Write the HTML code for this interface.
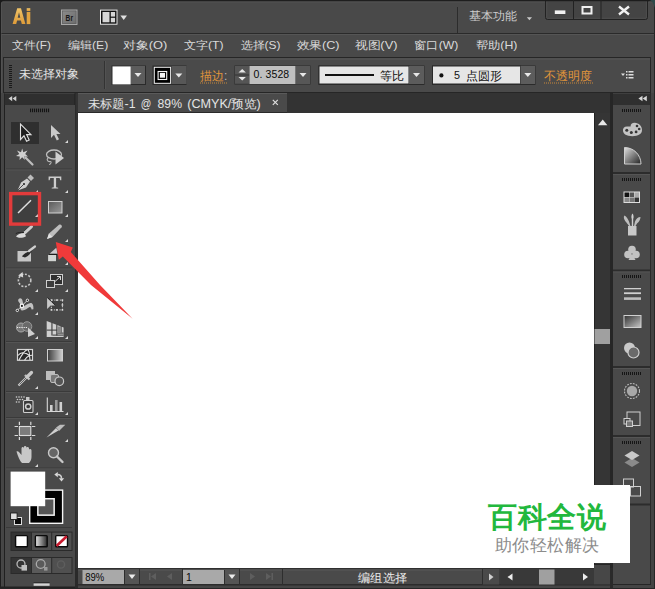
<!DOCTYPE html>
<html><head><meta charset="utf-8">
<style>
html,body{margin:0;padding:0;width:655px;height:589px;overflow:hidden;background:#3a3a3a}
svg{display:block}
text{font-family:"Liberation Sans",sans-serif}
</style></head><body>
<svg width="655" height="589" viewBox="0 0 655 589">
<!-- window bg -->
<rect x="0" y="0" width="655" height="589" fill="#494949"/>
<rect x="0" y="0" width="655" height="1.5" fill="#1e1e1e"/>
<rect x="0" y="0" width="1.2" height="589" fill="#1e1e1e"/><rect x="1.2" y="1.5" width="0.8" height="587" fill="#575757"/><rect x="1.2" y="1.5" width="653" height="0.8" fill="#575757"/><path d="M0 0H5C2.5 0.5 0.5 2.5 0 5Z" fill="#1a1a1a"/>
<!-- title bar -->
<defs><linearGradient id="aig" x1="0" y1="0" x2="0" y2="1"><stop offset="0" stop-color="#f0c468"/><stop offset="1" stop-color="#dd9a38"/></linearGradient></defs>
<path d="M12.6 24.1L17.2 8.2H21L25.4 24.1H21.8L20.9 20.5H17.1L16.2 24.1ZM17.7 17.8H20.3L19 12.3Z" fill="url(#aig)" fill-rule="evenodd"/>
<rect x="26.7" y="8.2" width="3.6" height="2.9" fill="url(#aig)"/><rect x="26.7" y="12" width="3.6" height="12.1" fill="#e2a440"/>
<defs><linearGradient id="brg" x1="0" y1="0" x2="1" y2="1"><stop offset="0" stop-color="#8c8c8c"/><stop offset="1" stop-color="#6c6c6c"/></linearGradient></defs>
<rect x="61.5" y="10" width="15.5" height="14.5" fill="url(#brg)" stroke="#a8a8a8" stroke-width="1"/>
<rect x="62.5" y="11" width="13.5" height="12.5" fill="none" stroke="#5a5a5a" stroke-width="0.6"/>
<text x="65.6" y="20.8" font-size="8.6" font-weight="bold" fill="#161616" textLength="7.4" lengthAdjust="spacingAndGlyphs">Br</text>
<rect x="100" y="9.6" width="17.5" height="15.1" fill="#e8e8e8"/>
<rect x="101" y="10.6" width="15.5" height="13.1" fill="#111"/>
<rect x="102.5" y="12" width="7" height="10.3" fill="#d6d6d6"/>
<rect x="110.8" y="12" width="4.3" height="4.6" fill="#d6d6d6"/>
<rect x="110.8" y="17.8" width="4.3" height="4.5" fill="#d6d6d6"/>
<path d="M120.4 15.4h6.6l-3.3 4.7z" fill="#e0e0e0"/>
<rect x="457" y="7" width="1" height="26" fill="#2c2c2c"/>
<rect x="458" y="7" width="1" height="26" fill="#4a4a4a"/>
<text x="469" y="20" font-size="12" fill="#cdcdcd">基本功能</text>
<path d="M526.8 17.2h5.2l-2.6 3z" fill="#c8c8c8"/>
<!-- window buttons -->
<path d="M545.5 0v17.5a2 2 0 0 0 2 2h98a2 2 0 0 0 2-2v-17.5" fill="#444444" stroke="#222" stroke-width="1"/>
<path d="M546.8 1.5v15.8a1 1 0 0 0 1 1h97.6a1 1 0 0 0 1-1v-15.8" fill="none" stroke="#505050" stroke-width="0.8"/>
<rect x="545" y="0" width="104" height="1.2" fill="#1c1c1c"/>
<rect x="573" y="0" width="1" height="19.5" fill="#222"/>
<rect x="600.5" y="0" width="1" height="19.5" fill="#222"/>
<rect x="554.8" y="10.4" width="10.6" height="3.6" fill="#f0f0f0"/>
<rect x="582.5" y="7" width="9" height="6.5" fill="none" stroke="#f0f0f0" stroke-width="2"/>
<path d="M619 6.5l10 8 M629 6.5l-10 8" stroke="#f0f0f0" stroke-width="2.4"/>
<!-- menu bar -->
<rect x="1.5" y="33" width="653" height="1" fill="#2a2a2a"/><rect x="1.5" y="34" width="653" height="1" fill="#555"/>
<g font-size="11" fill="#dadada"><text x="12.1" y="48.6" textLength="38.8" lengthAdjust="spacingAndGlyphs">文件(F)</text><text x="67.7" y="48.6" textLength="40.6" lengthAdjust="spacingAndGlyphs">编辑(E)</text><text x="123.1" y="48.6" textLength="44.2" lengthAdjust="spacingAndGlyphs">对象(O)</text><text x="183.7" y="48.6" textLength="39.8" lengthAdjust="spacingAndGlyphs">文字(T)</text><text x="240.7" y="48.6" textLength="39.8" lengthAdjust="spacingAndGlyphs">选择(S)</text><text x="296.7" y="48.6" textLength="42.8" lengthAdjust="spacingAndGlyphs">效果(C)</text><text x="354.7" y="48.6" textLength="42.8" lengthAdjust="spacingAndGlyphs">视图(V)</text><text x="414.3" y="48.6" textLength="44.0" lengthAdjust="spacingAndGlyphs">窗口(W)</text><text x="475.7" y="48.6" textLength="41.8" lengthAdjust="spacingAndGlyphs">帮助(H)</text></g>
<!-- control bar -->
<rect x="3.5" y="57.5" width="647" height="35" fill="#4a4a4a" stroke="#262626" stroke-width="1"/><rect x="4" y="58.5" width="646" height="1" fill="#565656"/>

<!-- control bar content -->
<g fill="#1a1a1a"><rect x="9" y="65" width="3" height="1"/><rect x="9" y="67" width="3" height="1"/><rect x="9" y="69" width="3" height="1"/><rect x="9" y="71" width="3" height="1"/><rect x="9" y="73" width="3" height="1"/><rect x="9" y="75" width="3" height="1"/><rect x="9" y="77" width="3" height="1"/><rect x="9" y="79" width="3" height="1"/><rect x="9" y="81" width="3" height="1"/><rect x="9" y="83" width="3" height="1"/><rect x="9" y="85" width="3" height="1"/><rect x="9" y="87" width="3" height="1"/></g>
<text x="19" y="78.2" font-size="12" fill="#e4e4e4">未选择对象</text>
<rect x="104" y="61" width="1" height="28" fill="#333"/><rect x="105" y="61" width="1" height="28" fill="#525252"/>
<rect x="111.5" y="65.5" width="34.5" height="19.5" fill="#2a2a2a"/><rect x="152.5" y="65.5" width="34" height="19.5" fill="#2a2a2a"/><rect x="318.5" y="65.5" width="106" height="19.5" fill="#2a2a2a"/><rect x="432" y="65.5" width="103.5" height="19.5" fill="#2a2a2a"/>
<rect x="112.5" y="66.4" width="18.2" height="18" fill="#fff"/>
<rect x="131" y="66" width="14" height="18" fill="#5c5c5c"/>
<path d="M134.5 73h7l-3.5 4z" fill="#e8e8e8"/>
<rect x="153.8" y="66.8" width="17.3" height="17" fill="#f0f0f0"/>
<rect x="154.8" y="67.8" width="15.3" height="15" fill="#000"/>
<rect x="158.1" y="71.5" width="8.6" height="8" fill="none" stroke="#f4f4f4" stroke-width="1.1"/>
<rect x="159.9" y="72.9" width="5.1" height="4.8" fill="#f4f4f4"/>
<rect x="171.5" y="66" width="15" height="18" fill="#575757"/>
<path d="M175.3 73.5h7l-3.5 4z" fill="#e8e8e8"/>
<text x="200" y="80" font-size="12" fill="#e2963a">描边</text>
<text x="224" y="80" font-size="12" fill="#bbb">:</text>
<path d="M200 83h28" stroke="#c8883a" stroke-width="1" stroke-dasharray="1 1"/>
<rect x="234.5" y="65.5" width="76" height="19" fill="#2a2a2a"/>
<rect x="235" y="66" width="14.5" height="8.6" fill="#555"/><rect x="235" y="75.4" width="14.5" height="8.4" fill="#555"/>
<path d="M238.5 72.5l3.7-3.6 3.7 3.6z M238.5 77l3.7 3.6 3.7-3.6z" fill="#e6e6e6"/>
<rect x="249.5" y="66" width="46" height="18" fill="#bfbfbf"/>
<text x="253.5" y="78" font-size="10.5" fill="#0a0a0a" textLength="35.7" lengthAdjust="spacing">0. 3528</text>
<rect x="296" y="66" width="14" height="18" fill="#575757"/>
<path d="M299.5 73h7l-3.5 4z" fill="#e8e8e8"/>
<rect x="319" y="66" width="90" height="18" fill="#e6e6e6" stroke="#2a2a2a" stroke-width="1"/>
<rect x="325" y="74" width="49" height="2" fill="#111"/>
<text x="380" y="80" font-size="12" fill="#111">等比</text>
<rect x="409" y="66" width="15" height="18" fill="#5c5c5c"/>
<path d="M413 73h7l-3.5 4z" fill="#e8e8e8"/>
<rect x="432.5" y="66" width="88" height="18" fill="#e6e6e6" stroke="#2a2a2a" stroke-width="1"/>
<circle cx="441.4" cy="75.4" r="2.1" fill="#111"/>
<text x="454" y="79" font-size="11" fill="#111" textLength="6" lengthAdjust="spacingAndGlyphs">5</text>
<text x="466" y="79.5" font-size="12" fill="#111" textLength="36" lengthAdjust="spacing">点圆形</text>
<rect x="520.5" y="66" width="14.5" height="18" fill="#5c5c5c"/>
<path d="M524.3 73h7l-3.5 4z" fill="#e8e8e8"/>
<text x="544" y="80" font-size="12" fill="#e2963a">不透明度</text>
<path d="M544 83h49" stroke="#c8883a" stroke-width="1" stroke-dasharray="1 1"/>
<path d="M621 73.5h4l-2 2.5z" fill="#ddd"/>
<g fill="#ddd"><rect x="626" y="71" width="1.5" height="1.5"/><rect x="626" y="74" width="1.5" height="1.5"/><rect x="626" y="77" width="1.5" height="1.5"/><rect x="628.5" y="71" width="5" height="1.5"/><rect x="628.5" y="74" width="5" height="1.5"/><rect x="628.5" y="77" width="5" height="1.5"/></g>

<!-- document area background -->
<rect x="75" y="93" width="538" height="496" fill="#333333"/>
<!-- left toolbar -->
<rect x="4" y="93" width="71.3" height="496" fill="#202020"/>
<rect x="1.2" y="93" width="2.8" height="496" fill="#454545"/>
<rect x="4.5" y="93" width="70" height="12" fill="#2f2f2f"/><rect x="4.5" y="93" width="70" height="0.8" fill="#444"/>
<path d="M12.2 95.9v5.4l-3.7-2.7z M16.3 95.9v5.4l-3.7-2.7z" fill="#d0d0d0"/>
<rect x="5" y="105" width="70" height="484" fill="#494949"/>
<g fill="#141414"><rect x="30" y="108.6" width="1.1" height="3.6"/><rect x="32" y="108.6" width="1.1" height="3.6"/><rect x="34" y="108.6" width="1.1" height="3.6"/><rect x="36" y="108.6" width="1.1" height="3.6"/><rect x="38" y="108.6" width="1.1" height="3.6"/><rect x="40" y="108.6" width="1.1" height="3.6"/><rect x="42" y="108.6" width="1.1" height="3.6"/><rect x="44" y="108.6" width="1.1" height="3.6"/><rect x="46" y="108.6" width="1.1" height="3.6"/><rect x="48" y="108.6" width="1.1" height="3.6"/></g>


<!-- toolbar separators -->
<g fill="#3a3a3a"><rect x="6" y="168.5" width="66" height="1"/><rect x="6" y="267.5" width="66" height="1"/><rect x="6" y="341" width="66" height="1"/><rect x="6" y="391" width="66" height="1"/><rect x="6" y="417" width="66" height="1"/><rect x="6" y="467.5" width="66" height="1"/><rect x="6" y="527" width="66" height="1"/></g>
<g fill="#545454"><rect x="6" y="169.5" width="66" height="1"/><rect x="6" y="268.5" width="66" height="1"/><rect x="6" y="342" width="66" height="1"/><rect x="6" y="392" width="66" height="1"/><rect x="6" y="418" width="66" height="1"/><rect x="6" y="468.5" width="66" height="1"/></g>
<!-- selected tool bg -->
<rect x="11" y="122" width="28" height="22" fill="#2f2f2f"/>
<rect x="12" y="195" width="26" height="28" fill="#3f3f3f"/>
<!-- flyout triangles -->
<g fill="#d8d8d8">
<path d="M68 140v3h-3z"/><path d="M68 190v3h-3z"/><path d="M38 190v3h-3z"/>
<path d="M38 214v3h-3z"/><path d="M68 214v3h-3z"/><path d="M68 239v3h-3z"/>
<path d="M68 262v3h-3z"/><path d="M38 289v3h-3z"/><path d="M68 289v3h-3z"/>
<path d="M38 312v3h-3z"/><path d="M38 336v3h-3z"/><path d="M68 336v3h-3z"/>
<path d="M38 386v3h-3z"/><path d="M38 412v3h-3z"/><path d="M68 412v3h-3z"/>
<path d="M68 439v3h-3z"/><path d="M38 464v3h-3z"/>
</g>
<!-- selection -->
<path d="M20.5 124L20.5 139.5L24 135.8L26.6 141.2L29.2 140L26.6 134.6L31 134.6Z" fill="#1e1e1e" stroke="#e0e0e0" stroke-width="1.1" stroke-linejoin="miter"/>
<!-- direct selection -->
<path d="M51 125L51 138L54 134.8L56.8 140.4L59 139.2L56.4 134L60.5 134Z" fill="#c9c9c9"/>
<!-- magic wand -->
<path d="M22.2 148.5L23.3 152.2L27.5 150.5L25.2 154L28 156.5L24.3 156.5L24.8 160L22.2 157.2L19.5 160L19.8 156.5L16 156L19.3 154L17 150.5L21 152.2Z" fill="#d0d0d0"/>
<path d="M25.5 157.5L32.5 164.5" stroke="#bdbdbd" stroke-width="2.2" stroke-linecap="round"/>
<!-- lasso -->
<ellipse cx="54" cy="154.5" rx="7.5" ry="4.5" fill="none" stroke="#c0c0c0" stroke-width="1.3"/>
<path d="M48 158c-2 2 0 4 2 3.5s1 3-1 3" fill="none" stroke="#b8b8b8" stroke-width="1.1"/>
<path d="M55.5 151.5L55.5 164.5L64 158Z" fill="#cfcfcf"/>
<!-- pen -->
<path d="M17.5 190.5L21 182.5L27 178.5L30 181.5L26 187.5Z" fill="#cfcfcf"/>
<path d="M17.5 190.5L23.5 184.5" stroke="#2a2a2a" stroke-width="0.8"/>
<circle cx="24" cy="184" r="1" fill="#222"/>
<path d="M27.5 177.5L30.5 174.5L34 178L31 181Z" fill="#bdbdbd"/>
<!-- type T -->
<path d="M48.6 176.5H61.3V180.2L60.3 180.2L59.6 178.1H56.1V187.2L58.2 187.7V188.6H51.7V187.7L53.8 187.2V178.1H50.3L49.6 180.2L48.6 180.2Z" fill="#cdcdcd"/>
<!-- line -->
<path d="M18 213L31 200.3" stroke="#dedede" stroke-width="1.5"/>
<!-- rect -->
<defs>
<linearGradient id="gr1" x1="0" y1="0" x2="1" y2="1"><stop offset="0" stop-color="#5a5a5a"/><stop offset="1" stop-color="#9a9a9a"/></linearGradient>
<linearGradient id="gr2" x1="0" y1="0" x2="1" y2="0"><stop offset="0" stop-color="#3a3a3a"/><stop offset="1" stop-color="#d0d0d0"/></linearGradient>
<linearGradient id="gr3" x1="0" y1="0" x2="1" y2="1"><stop offset="0" stop-color="#303030"/><stop offset="1" stop-color="#c8c8c8"/></linearGradient>
</defs>
<rect x="48.5" y="201.5" width="13.5" height="11.5" fill="url(#gr1)" stroke="#d0d0d0" stroke-width="1"/>
<!-- brush -->
<path d="M24.2 231.2L30.6 225.6" stroke="#1e1e1e" stroke-width="1"/>
<path d="M25 232.6L31.5 226.6" stroke="#cdcdcd" stroke-width="3" stroke-linecap="round"/>
<path d="M15.8 233.6C18 232.4 21 232.2 24 232.6" stroke="#1e1e1e" stroke-width="0.9" fill="none"/>
<path d="M16 236.6C17 234.4 20.5 233.2 24.6 233L26 236.2C23 237.9 19 238.6 16 236.6Z" fill="#dadada"/>
<!-- pencil -->
<path d="M47 239L49 233.5L59 224.8C60.5 223.5 62.8 225.8 61.6 227.3L52.5 237Z" fill="#bdbdbd"/>
<path d="M47 239L49 233.5L52.5 237Z" fill="#e0e0e0"/>
<!-- blob brush -->
<rect x="17.5" y="251" width="13.5" height="10.5" fill="#c6c6c6"/>
<path d="M22 256.5C24 253 27 252.5 28.5 251.5L33 249.5C31 252 29.5 256 25 257.5Z" fill="#2a2a2a"/>
<path d="M29 251L35 246.5" stroke="#cfcfcf" stroke-width="2.2" stroke-linecap="round"/>
<!-- eraser -->
<path d="M49.5 253.8L56.3 247.8L57.5 253.8Z" fill="#cdc8cc"/>
<path d="M49 254.4H57" stroke="#1a1a1a" stroke-width="1"/>
<rect x="48.1" y="255" width="7.9" height="6.2" fill="#d2d4d2"/>
<!-- rotate -->
<circle cx="24.6" cy="280.4" r="6.2" fill="none" stroke="#c8c8c8" stroke-width="1.6" stroke-dasharray="2 1.6"/>
<path d="M18.2 275.6L22.6 272L23.2 277.6Z" fill="#d6d6d6"/>
<!-- scale -->
<rect x="50.5" y="274.5" width="12" height="10" fill="#2f2f2f" stroke="#cfcfcf" stroke-width="1"/>
<rect x="46.5" y="280.5" width="8" height="7" fill="#3c3c3c" stroke="#cfcfcf" stroke-width="1"/>
<path d="M55 281.5L60.5 276.5M57 276.5H60.5V280" fill="none" stroke="#d8d8d8" stroke-width="1"/>
<!-- warp -->
<path d="M18.2 301C17.8 297.6 21.8 297.2 22.4 300.2L23.8 306.6C26 304.8 28.5 303.2 30.6 303C32.6 302.9 33.8 305.6 33.4 309.2L31.6 309.4C31.2 307.6 30.6 306.6 29.6 307C27.4 308.4 25.2 310.4 22.4 310.4C20.4 310.4 19.8 308 20.2 304.4C19.8 302.6 18.6 302.4 18.2 301Z" fill="#c2c2c2"/>
<path d="M17.3 310.4L27.4 300.3" stroke="#e0e0e0" stroke-width="0.9"/>
<circle cx="21.9" cy="305.9" r="1.7" fill="#222" stroke="#f2f2f2" stroke-width="1.2"/>
<circle cx="17.3" cy="310.4" r="1.2" fill="#222" stroke="#ececec" stroke-width="1"/>
<circle cx="27.4" cy="300.3" r="1.2" fill="#222" stroke="#ececec" stroke-width="1"/>
<!-- free transform -->
<rect x="51.4" y="300.1" width="11" height="9.8" fill="#404040" stroke="#d8d8d8" stroke-width="0.9" stroke-dasharray="1.4 1.4"/>
<g fill="#e0e0e0"><rect x="50.6" y="299.3" width="1.6" height="1.6"/><rect x="61.6" y="299.3" width="1.6" height="1.6"/><rect x="50.6" y="309.1" width="1.6" height="1.6"/><rect x="61.6" y="309.1" width="1.6" height="1.6"/><rect x="56.1" y="299.3" width="1.6" height="1.6"/><rect x="56.1" y="309.1" width="1.6" height="1.6"/><rect x="61.6" y="304.2" width="1.6" height="1.6"/></g>
<path d="M47.1 298L55 305.6H50.6L47.1 309Z" fill="#c8c8c8"/>
<path d="M47.6 297.6L55.2 305" stroke="#1e1e1e" stroke-width="0.8"/>
<!-- shape builder -->
<circle cx="21" cy="327.5" r="4.5" fill="#777" stroke="#aaa" stroke-width="1"/>
<circle cx="27" cy="326.5" r="4.8" fill="#6a6a6a" stroke="#999" stroke-width="1"/>
<path d="M17 327.5H28" stroke="#eee" stroke-width="1.2" stroke-dasharray="1.2 1"/>
<path d="M28 327.5L28 337L35 334Z" fill="#cfcfcf"/>
<!-- perspective grid -->
<path d="M46.7 321L63.6 327.5V337H46.7Z" fill="#cfcfcf"/>
<g fill="#3a3a3a"><rect x="51.4" y="322.5" width="1.1" height="13"/><rect x="56.3" y="324.5" width="1.1" height="11"/><rect x="46.7" y="329.6" width="10.7" height="1"/><rect x="57.4" y="332.6" width="6.2" height="1"/><rect x="52.5" y="334.6" width="11.1" height="1"/><rect x="60.6" y="326" width="1" height="6.6"/></g>
<rect x="57.4" y="326.5" width="3.2" height="6.1" fill="#8a8a8a"/>
<!-- mesh -->
<rect x="17.5" y="349.5" width="15" height="10.8" fill="#2a2a2a" stroke="#d6d6d6" stroke-width="1.2"/>
<path d="M18 355.5Q20.5 352.2 23.5 352.8Q27 353.5 29.5 355.5L32.5 355.3M19 360Q21 356 23.5 352.8Q25.2 350.6 27.5 349.5M24.5 360.2Q26.5 357 29.5 355.5Q29.8 352.5 28 349.5M29.5 355.5L30 360" fill="none" stroke="#e6e6e6" stroke-width="1.1"/>
<!-- gradient -->
<rect x="47.5" y="349.5" width="15" height="11.5" fill="url(#gr2)" stroke="#cfcfcf" stroke-width="1"/>
<!-- eyedropper -->
<path d="M18.5 385.5L27 377" stroke="#d0d0d0" stroke-width="2.2"/>
<path d="M19.5 384.5L26 378" stroke="#444" stroke-width="0.8"/>
<path d="M25 375L29.5 379.5" stroke="#c0c0c0" stroke-width="2.4"/>
<path d="M27.5 376.5L31.5 372.5" stroke="#c8c8c8" stroke-width="3.2" stroke-linecap="round"/>
<!-- blend -->
<rect x="46" y="371" width="9" height="9" fill="#bdbdbd"/>
<rect x="50.5" y="374.5" width="8" height="8" rx="1.5" fill="#777" stroke="#bbb" stroke-width="1"/>
<circle cx="59.3" cy="381.3" r="4.3" fill="#555" stroke="#c8c8c8" stroke-width="1.2"/>
<!-- symbol sprayer -->
<g fill="#d0d0d0"><circle cx="16.5" cy="397" r="0.8"/><circle cx="19" cy="397" r="0.8"/><circle cx="21.5" cy="397" r="0.8"/><circle cx="24" cy="397" r="0.8"/><circle cx="17.5" cy="399.5" r="0.8"/><circle cx="20" cy="399.5" r="0.8"/><circle cx="22.5" cy="399.5" r="0.8"/><circle cx="16.5" cy="402" r="0.8"/><circle cx="19" cy="402" r="0.8"/></g>
<rect x="26" y="397" width="3.5" height="3" fill="#c8c8c8"/>
<rect x="23.5" y="400.5" width="9.5" height="12" rx="1" fill="#3a3a3a" stroke="#cfcfcf" stroke-width="1.1"/>
<circle cx="28.2" cy="406.5" r="2.6" fill="none" stroke="#d0d0d0" stroke-width="1.5"/>
<!-- graph -->
<path d="M47.3 397.5V411.5H63.5" fill="none" stroke="#d8d8d8" stroke-width="1.1"/>
<rect x="50" y="405" width="2.6" height="6" fill="#d0d0d0"/>
<rect x="55" y="400" width="2.6" height="11" fill="#999"/>
<rect x="59.5" y="402" width="2.6" height="9" fill="#d0d0d0"/>
<!-- artboard -->
<rect x="19.4" y="426.5" width="11.4" height="9" fill="#7c7c7c" stroke="#dcdcdc" stroke-width="1.1"/>
<path d="M14.6 426.5H18M32 426.5H35.3M14.6 435.5H18M32 435.5H35.3M19.4 421.7V425.1M30.8 421.7V425.1M19.4 436.9V439.9M30.8 436.9V439.9" stroke="#dadada" stroke-width="1.2"/>
<!-- slice -->
<path d="M46.5 437.5L56 428L58.5 430.5Z" fill="#d0d0d0"/>
<path d="M56 427.5L60 424.8H65.3L59 431Z" fill="#bbb"/>
<!-- hand -->
<path d="M16.5 451.5C18 450.5 20 453 21.5 455V448.5C21.5 446.5 24 446.5 24 448.5V447C24 445.5 26.5 445.5 26.5 447.5V448C26.5 446.5 29 446.5 29 448.5V450C29 448.5 31.5 448.5 31.5 450.5V457C31.5 460 30 462 29 463H22C20 461 18 457 16.5 451.5Z" fill="#c8c8c8"/>
<!-- zoom -->
<circle cx="53.5" cy="452.8" r="5" fill="#666" stroke="#c8c8c8" stroke-width="1.4"/>
<path d="M57 456.5L62.5 462" stroke="#c8c8c8" stroke-width="2.4" stroke-linecap="round"/>
<!-- fill / stroke swatches -->
<rect x="29" y="489.4" width="34.3" height="34.6" fill="#f4f4f4"/>
<rect x="30.4" y="490.8" width="31.5" height="31.8" fill="#000"/>
<rect x="37.1" y="498" width="17.8" height="17.9" fill="#f4f4f4"/>
<rect x="38.6" y="499.5" width="14.8" height="14.9" fill="#555"/>
<rect x="10.6" y="471.6" width="34.6" height="34.6" fill="#fff"/>
<path d="M57.5 474.6C60 474.6 61.5 476 61.5 478.4" fill="none" stroke="#d0d0d0" stroke-width="1.5"/>
<path d="M54.3 474.6L57.8 472V477.2Z" fill="#d8d8d8"/>
<path d="M58.8 478.2H64.2L61.5 481.6Z" fill="#d8d8d8"/>
<rect x="14.5" y="517.5" width="7" height="7" fill="#0a0a0a" stroke="#ddd" stroke-width="1"/>
<rect x="10.6" y="513" width="6.5" height="6.5" fill="#e0e0e0" stroke="#1a1a1a" stroke-width="0.9"/>
<!-- mode buttons -->
<defs><linearGradient id="gm" x1="0" y1="0" x2="1" y2="0"><stop offset="0" stop-color="#e8e8e8"/><stop offset="1" stop-color="#2a2a2a"/></linearGradient></defs>
<rect x="10.5" y="531.6" width="62" height="19.4" fill="#2a2a2a"/>
<rect x="11.5" y="532.6" width="19.5" height="17.4" fill="#343434"/>
<rect x="32" y="532.6" width="19.2" height="17.4" fill="#505050"/>
<rect x="52.2" y="532.6" width="19.3" height="17.4" fill="#505050"/>
<rect x="15.6" y="535.6" width="11.8" height="11.2" rx="0.8" fill="#fff" stroke="#0a0a0a" stroke-width="1.4"/>
<rect x="35.4" y="535.6" width="11.8" height="11.2" rx="0.8" fill="url(#gm)" stroke="#0a0a0a" stroke-width="1.4"/>
<rect x="55.7" y="535.6" width="11.8" height="11.2" rx="0.8" fill="#fff" stroke="#0a0a0a" stroke-width="1.4"/>
<path d="M56.5 546L66.8 536.3" stroke="#c81a2e" stroke-width="2.6"/>
<!-- screen mode -->
<rect x="10.5" y="557" width="62" height="17" fill="#2a2a2a"/>
<rect x="11.5" y="558" width="19.5" height="15" fill="#343434"/>
<rect x="32" y="558" width="19.2" height="15" fill="#5a5a5a"/>
<rect x="52.2" y="558" width="19.3" height="15" fill="#505050"/>
<circle cx="21" cy="564" r="4" fill="none" stroke="#b8b8b8" stroke-width="1.3"/>
<rect x="21.5" y="565" width="5.5" height="5.6" fill="#c0c0c0"/>
<circle cx="40.7" cy="564" r="4.4" fill="none" stroke="#aaa" stroke-width="1.3"/>
<rect x="44" y="567" width="3.5" height="3.6" fill="#999"/>
<circle cx="61" cy="564.5" r="3.6" fill="none" stroke="#5e5e5e" stroke-width="1.4"/>
<rect x="0" y="586.5" width="78" height="2.5" fill="#222"/>
<rect x="33.6" y="582.2" width="16" height="1" fill="#2a2a2a"/><rect x="33.6" y="583.4" width="16" height="2.4" fill="#d4d4d4"/>

<!-- document tab -->
<rect x="78" y="93" width="209" height="20" fill="#4a4a4a"/>
<rect x="78" y="93" width="209" height="1" fill="#5a5a5a"/><rect x="78" y="112" width="209" height="1" fill="#2a2a2a"/>
<g font-size="12" fill="#e4e4e4"><text x="87.6" y="108" textLength="48" lengthAdjust="spacingAndGlyphs">未标题-1</text><text x="140.8" y="108" textLength="10.6" lengthAdjust="spacingAndGlyphs">@</text><text x="157.6" y="108" textLength="24.4" lengthAdjust="spacingAndGlyphs">89%</text><text x="187.2" y="108" textLength="73.6" lengthAdjust="spacingAndGlyphs">(CMYK/预览)</text></g>
<path d="M272.8 99.8l5 5 M277.8 99.8l-5 5" stroke="#ddd" stroke-width="1.2"/>
<!-- canvas -->
<rect x="78" y="113" width="516" height="455" fill="#fff"/>
<!-- vertical scrollbar -->
<rect x="594" y="113" width="16" height="455" fill="#353535"/>
<path d="M598 125.2h9.4l-4.7-5.8z" fill="#e8e8e8"/>
<rect x="594" y="113" width="1" height="451" fill="#222"/>
<rect x="594.5" y="329" width="15.5" height="15" fill="#a0a0a0"/>

<!-- right panel dock -->
<rect x="610" y="93" width="3" height="496" fill="#262626"/>
<rect x="613" y="93" width="37" height="12" fill="#2f2f2f"/><rect x="613" y="93" width="37" height="0.8" fill="#444"/>
<path d="M642.5 95.7v5.6l-4.1-2.8z M646.8 95.7v5.6l-4.1-2.8z" fill="#d8d8d8"/>
<rect x="613" y="105" width="38" height="479" fill="#494949"/>
<rect x="651" y="93" width="4" height="496" fill="#434343"/>


<!-- right panel groups -->
<g fill="#2c2c2c"><rect x="613" y="172" width="37" height="2"/><rect x="613" y="269.5" width="37" height="2"/><rect x="613" y="366" width="37" height="2"/><rect x="613" y="435" width="37" height="2"/><rect x="613" y="503.5" width="37" height="2"/></g>
<g fill="#555"><rect x="613" y="174" width="37" height="1"/><rect x="613" y="271.5" width="37" height="1"/><rect x="613" y="368" width="37" height="1"/><rect x="613" y="437" width="37" height="1"/></g>
<rect x="650" y="93" width="1" height="496" fill="#2a2a2a"/>
<g fill="#151515">
<path d="M622 109h1v3h-1zM624 109h1v3h-1zM626 109h1v3h-1zM628 109h1v3h-1zM630 109h1v3h-1zM632 109h1v3h-1zM634 109h1v3h-1zM636 109h1v3h-1zM638 109h1v3h-1zM640 109h1v3h-1z"/>
<path d="M622 178h1v3h-1zM624 178h1v3h-1zM626 178h1v3h-1zM628 178h1v3h-1zM630 178h1v3h-1zM632 178h1v3h-1zM634 178h1v3h-1zM636 178h1v3h-1zM638 178h1v3h-1zM640 178h1v3h-1z"/>
<path d="M622 275h1v3h-1zM624 275h1v3h-1zM626 275h1v3h-1zM628 275h1v3h-1zM630 275h1v3h-1zM632 275h1v3h-1zM634 275h1v3h-1zM636 275h1v3h-1zM638 275h1v3h-1zM640 275h1v3h-1z"/>
<path d="M622 372h1v3h-1zM624 372h1v3h-1zM626 372h1v3h-1zM628 372h1v3h-1zM630 372h1v3h-1zM632 372h1v3h-1zM634 372h1v3h-1zM636 372h1v3h-1zM638 372h1v3h-1zM640 372h1v3h-1z"/>
<path d="M622 441h1v3h-1zM624 441h1v3h-1zM626 441h1v3h-1zM628 441h1v3h-1zM630 441h1v3h-1zM632 441h1v3h-1zM634 441h1v3h-1zM636 441h1v3h-1zM638 441h1v3h-1zM640 441h1v3h-1z"/>
</g>
<!-- palette -->
<path d="M623 131C622.6 128.2 624.2 126.6 627 126.5L630.6 126.4C630.6 124.2 632 122.8 634.6 122.8C639 123 642 126 642 130C642 134 638.2 136.2 632.4 136.2C626.4 136.2 623.4 134 623 131Z" fill="#c4c4c4"/>
<g fill="#353535"><circle cx="626.8" cy="130.2" r="1.5"/><circle cx="631.3" cy="132.4" r="1.5"/><circle cx="636.1" cy="131.9" r="1.4"/><circle cx="639.2" cy="129" r="1.3"/><circle cx="637" cy="126" r="1.3"/></g>
<!-- color guide -->
<defs><linearGradient id="gq" x1="0" y1="0" x2="1" y2="1"><stop offset="0" stop-color="#e0e0e0"/><stop offset="1" stop-color="#202020"/></linearGradient></defs>
<path d="M624.5 164V147.5A16.5 16.5 0 0 1 641 164Z" fill="url(#gq)" stroke="#d0d0d0" stroke-width="1"/>
<!-- swatches -->
<rect x="623.5" y="191.5" width="16.5" height="11.5" fill="#ddd"/>
<g><rect x="624.5" y="192.5" width="4.5" height="4.5" fill="#111"/><rect x="629.5" y="192.5" width="4.5" height="4.5" fill="#555"/><rect x="634.5" y="192.5" width="4.5" height="4.5" fill="#aaa"/><rect x="624.5" y="197.5" width="4.5" height="4.5" fill="#888"/><rect x="629.5" y="197.5" width="4.5" height="4.5" fill="#777"/><rect x="634.5" y="197.5" width="4.5" height="4.5" fill="#333"/></g>
<!-- brushes -->
<rect x="628" y="226" width="8.5" height="9.5" fill="#c8c8c8"/>
<path d="M629.5 226.5L626 222C623.5 219 623.5 216.5 624.5 215.5C626.5 216.5 628 219 629 221.5L630.5 226Z" fill="#bdbdbd"/>
<path d="M631.8 226V219C631 217 631.5 214.5 632.5 213.5C633.5 214.5 634 217 633.2 219V226Z" fill="#d0d0d0"/>
<path d="M634 226L635 221.5C636 219 638 217 640.5 217C640.5 219 639.5 221.5 637 223.5L635.2 226.5Z" fill="#bdbdbd"/>
<!-- club -->
<g fill="#c2c2c2"><circle cx="632" cy="249.5" r="3.8"/><circle cx="628" cy="254.5" r="3.8"/><circle cx="636" cy="254.5" r="3.8"/><path d="M631 255L628.5 260H635.5L633 255Z"/></g>
<!-- stroke lines -->
<rect x="624" y="288" width="17" height="1.3" fill="#cfcfcf"/>
<rect x="624" y="292.3" width="17" height="1.8" fill="#cfcfcf"/>
<rect x="624" y="297.3" width="17" height="2.6" fill="#bdbdbd"/>
<!-- gradient -->
<rect x="624" y="315.5" width="17" height="12" fill="url(#gr3)" stroke="#d0d0d0" stroke-width="1"/>
<!-- transparency -->
<circle cx="629.5" cy="348" r="5.5" fill="#c8c8c8"/>
<circle cx="633.5" cy="352.5" r="5.5" fill="#6a6a6a" stroke="#cfcfcf" stroke-width="1.2"/>
<!-- appearance -->
<circle cx="632" cy="391" r="7.5" fill="none" stroke="#bdbdbd" stroke-width="1.1" stroke-dasharray="1.8 1.2"/>
<circle cx="632" cy="391" r="5.2" fill="#a8a8a8"/>
<!-- graphic styles -->
<rect x="627" y="412" width="13" height="13.5" fill="none" stroke="#cfcfcf" stroke-width="1"/>
<rect x="624" y="418.5" width="6" height="5.5" fill="#444" stroke="#cfcfcf" stroke-width="1"/>
<rect x="626.5" y="421" width="6" height="5.5" fill="#777" stroke="#cfcfcf" stroke-width="1"/>
<!-- layers -->
<path d="M624.5 462.5L632 458L639.5 462.5L632 467Z" fill="#8a8a8a"/>
<path d="M624.5 455.5L632 451L639.5 455.5L632 460Z" fill="#c8c8c8"/>
<!-- artboards -->
<rect x="623.5" y="479" width="10" height="8" fill="none" stroke="#cfcfcf" stroke-width="1"/>
<rect x="630.5" y="486.5" width="10" height="9.5" fill="none" stroke="#cfcfcf" stroke-width="1"/>

<!-- status bar -->
<defs><linearGradient id="sb" x1="0" y1="0" x2="0" y2="1"><stop offset="0" stop-color="#474747"/><stop offset="1" stop-color="#3b3b3b"/></linearGradient></defs>
<rect x="75" y="568" width="538" height="21" fill="#2a2a2a"/><rect x="78" y="585" width="532" height="3" fill="#454545"/>
<rect x="612" y="584" width="39" height="1" fill="#262626"/><rect x="612" y="585" width="39" height="3" fill="#454545"/><rect x="0" y="588" width="655" height="1" fill="#262626"/>
<rect x="654" y="0" width="1" height="589" fill="#262626"/>
<path d="M650 0H655V8C654 4 652 1 650 0Z" fill="#2f4a4a"/>
<rect x="78" y="568.8" width="532" height="15.6" fill="#4a4a4a"/><rect x="78" y="569.6" width="532" height="1" fill="#565656"/>
<rect x="78" y="584.4" width="532" height="1" fill="#262626"/>
<rect x="82.5" y="570" width="41.5" height="14" fill="#a9a9a9"/>
<text x="85.2" y="581.3" font-size="10.5" fill="#0a0a0a" textLength="19" lengthAdjust="spacingAndGlyphs">89%</text>
<rect x="124" y="570" width="1" height="14" fill="#2e2e2e"/>
<rect x="125" y="570" width="14" height="14" fill="#555"/>
<path d="M128.5 574.5h7l-3.5 4.5z" fill="#ececec"/>
<rect x="139" y="569" width="1" height="16" fill="#2e2e2e"/>
<g fill="#5e5e5e"><rect x="149" y="573" width="1.5" height="7"/><path d="M156 573v7l-5-3.5z"/><path d="M172 573v7l-5-3.5z"/></g>
<rect x="182" y="569" width="1" height="16" fill="#2e2e2e"/>
<rect x="183" y="570" width="41" height="14" fill="#a9a9a9"/>
<text x="186" y="581.3" font-size="10.5" fill="#0a0a0a">1</text>
<rect x="224" y="570" width="1" height="14" fill="#2e2e2e"/>
<rect x="225" y="570" width="14" height="14" fill="#555"/>
<path d="M228.5 574.5h7l-3.5 4.5z" fill="#ececec"/>
<rect x="239" y="569" width="1" height="16" fill="#2e2e2e"/>
<g fill="#5e5e5e"><path d="M250 573v7l5-3.5z"/><path d="M266 573v7l5-3.5z"/><rect x="271.5" y="573" width="1.5" height="7"/></g>
<rect x="282" y="569" width="1" height="16" fill="#2e2e2e"/>
<text x="358" y="582" font-size="12" fill="#ececec" textLength="49" lengthAdjust="spacingAndGlyphs">编组选择</text>
<rect x="482" y="569" width="1" height="16" fill="#2e2e2e"/>
<rect x="483" y="569" width="16.5" height="15.5" fill="#4a4a4a"/>
<path d="M489 573.5v7l4.5-3.5z" fill="#cfcfcf"/>
<rect x="499.5" y="569" width="1" height="16" fill="#2e2e2e"/>
<rect x="500.5" y="569" width="93.5" height="15.5" fill="#393939"/>
<path d="M512.5 573.5v7l-5-3.5z" fill="#eee"/>
<path d="M583 573.2v7.4l5-3.7z" fill="#eee"/>
<rect x="539" y="569.5" width="15.5" height="15" fill="#a0a0a0"/>
<rect x="594" y="569" width="1" height="16" fill="#2e2e2e"/>
<rect x="594" y="564" width="16" height="1" fill="#262626"/><rect x="594" y="565" width="16" height="19.4" fill="#474747"/>
<rect x="610" y="568" width="3" height="21" fill="#2a2a2a"/>

<!-- watermark -->
<rect x="470" y="485" width="160" height="78" fill="#fff"/>
<text x="488" y="526.6" font-size="29" font-weight="bold" fill="#22b83d" textLength="117.5" lengthAdjust="spacing">百科全说</text>
<text x="494.6" y="551.2" font-size="17" fill="#8c8c8c" textLength="104.5" lengthAdjust="spacing">助你轻松解决</text>

<!-- red annotations -->
<rect x="10.7" y="193.6" width="28.8" height="30.5" fill="none" stroke="#e23b3b" stroke-width="3.4"/>
<path d="M55.8 242L72.8 247.6L70.8 252L100 285L132.6 318.8L91 285L62.8 256.4L58.8 259.8Z" fill="#f03a3a"/>
</svg>
</body></html>
